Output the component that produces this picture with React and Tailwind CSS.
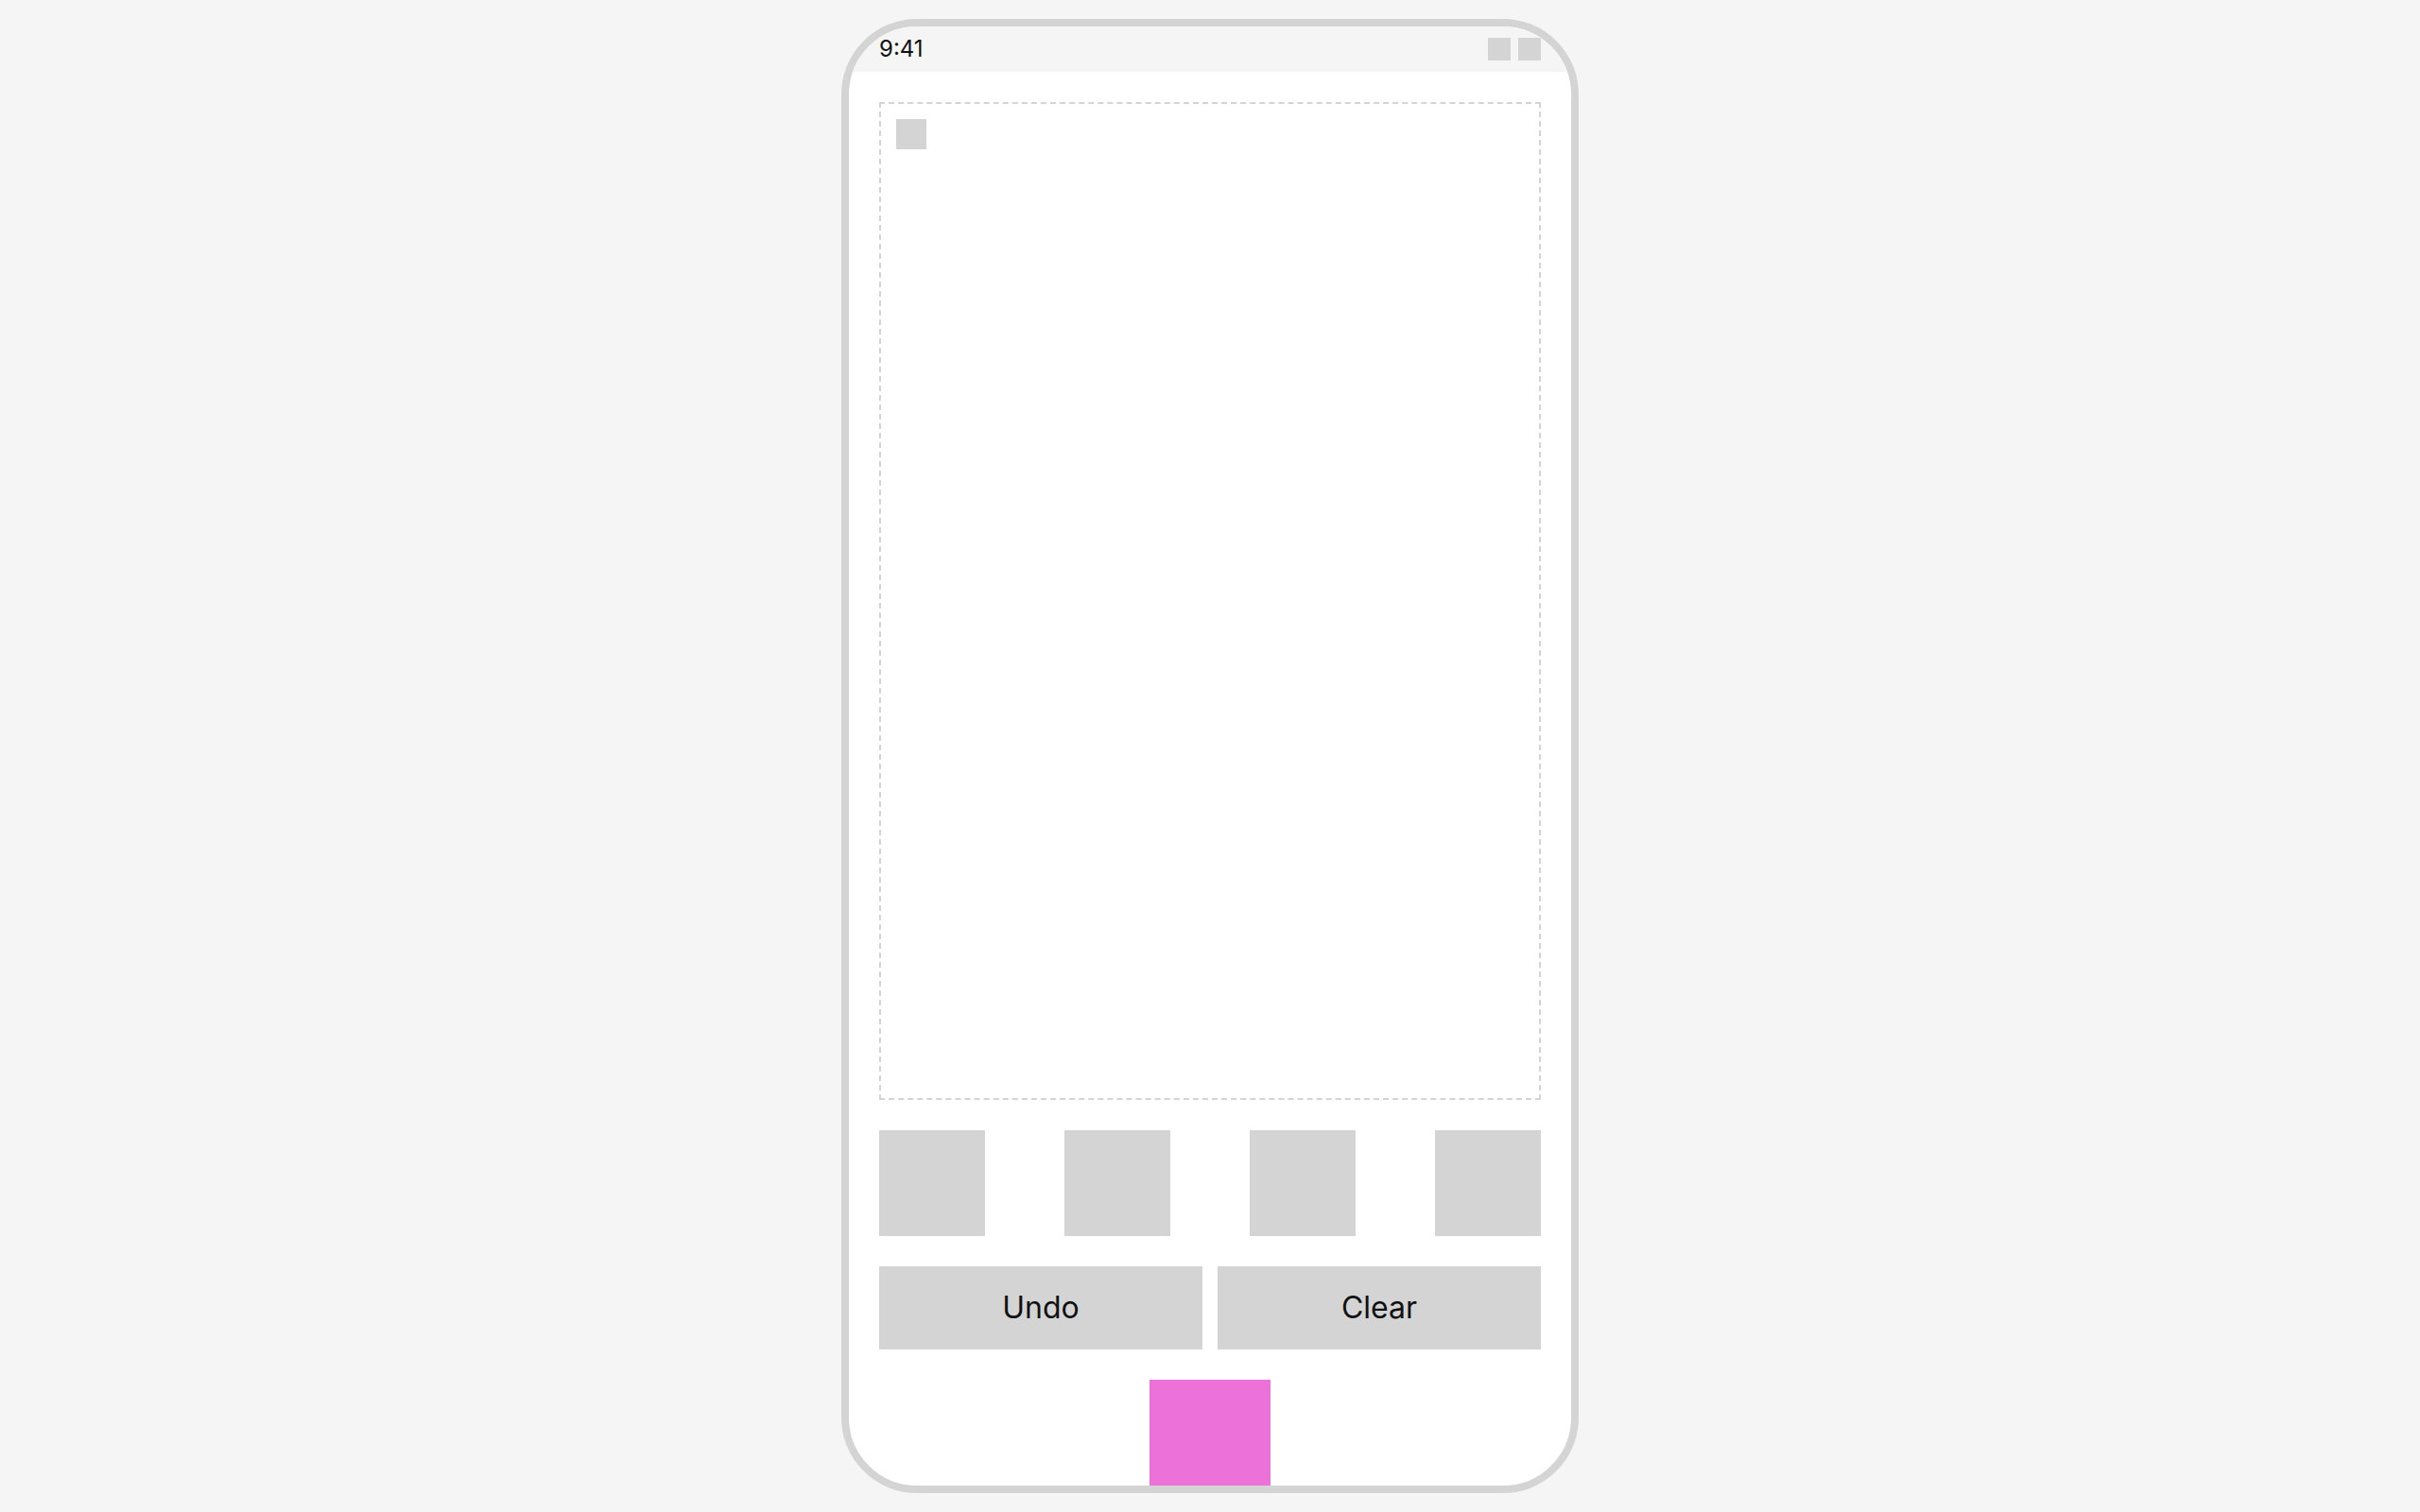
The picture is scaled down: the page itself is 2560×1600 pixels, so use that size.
import React from 'react';

const tools = [0, 1, 2, 3];

export default function App() {
  return (
    <div className="min-h-screen w-full bg-[#f5f5f5] flex justify-center pt-[20px]" style={{ fontFamily: 'Inter, "Noto Sans", sans-serif' }}>
      <div className="w-[780px] h-[1560px] border-8 border-[#d4d4d4] rounded-[80px] overflow-hidden bg-white flex flex-col">
        <div className="h-[48px] shrink-0 bg-[#f5f5f5] flex items-center justify-between px-8">
          <span className="text-[24px] text-[#111] leading-none">9:41</span>
          <div className="flex gap-2">
            <div className="w-6 h-6 bg-[#d4d4d4]" />
            <div className="w-6 h-6 bg-[#d4d4d4]" />
          </div>
        </div>
        <div className="flex flex-col gap-8 px-8 pt-8">
          <div className="h-[1056px] shrink-0 border-2 border-dashed border-[#d4d4d4] p-4">
            <div className="w-8 h-8 bg-[#d4d4d4]" />
          </div>
          <div className="flex justify-between">
            {tools.map((t) => (
              <div key={t} className="w-[112px] h-[112px] bg-[#d4d4d4]" />
            ))}
          </div>
          <div className="grid grid-cols-2 gap-4">
            <button className="h-[88px] bg-[#d4d4d4] text-[32px] text-[#111]">Undo</button>
            <button className="h-[88px] bg-[#d4d4d4] text-[32px] text-[#111]">Clear</button>
          </div>
          <div className="flex justify-center">
            <div className="w-[128px] h-[128px] shrink-0 bg-[#ec72d9]" />
          </div>
        </div>
      </div>
    </div>
  );
}
